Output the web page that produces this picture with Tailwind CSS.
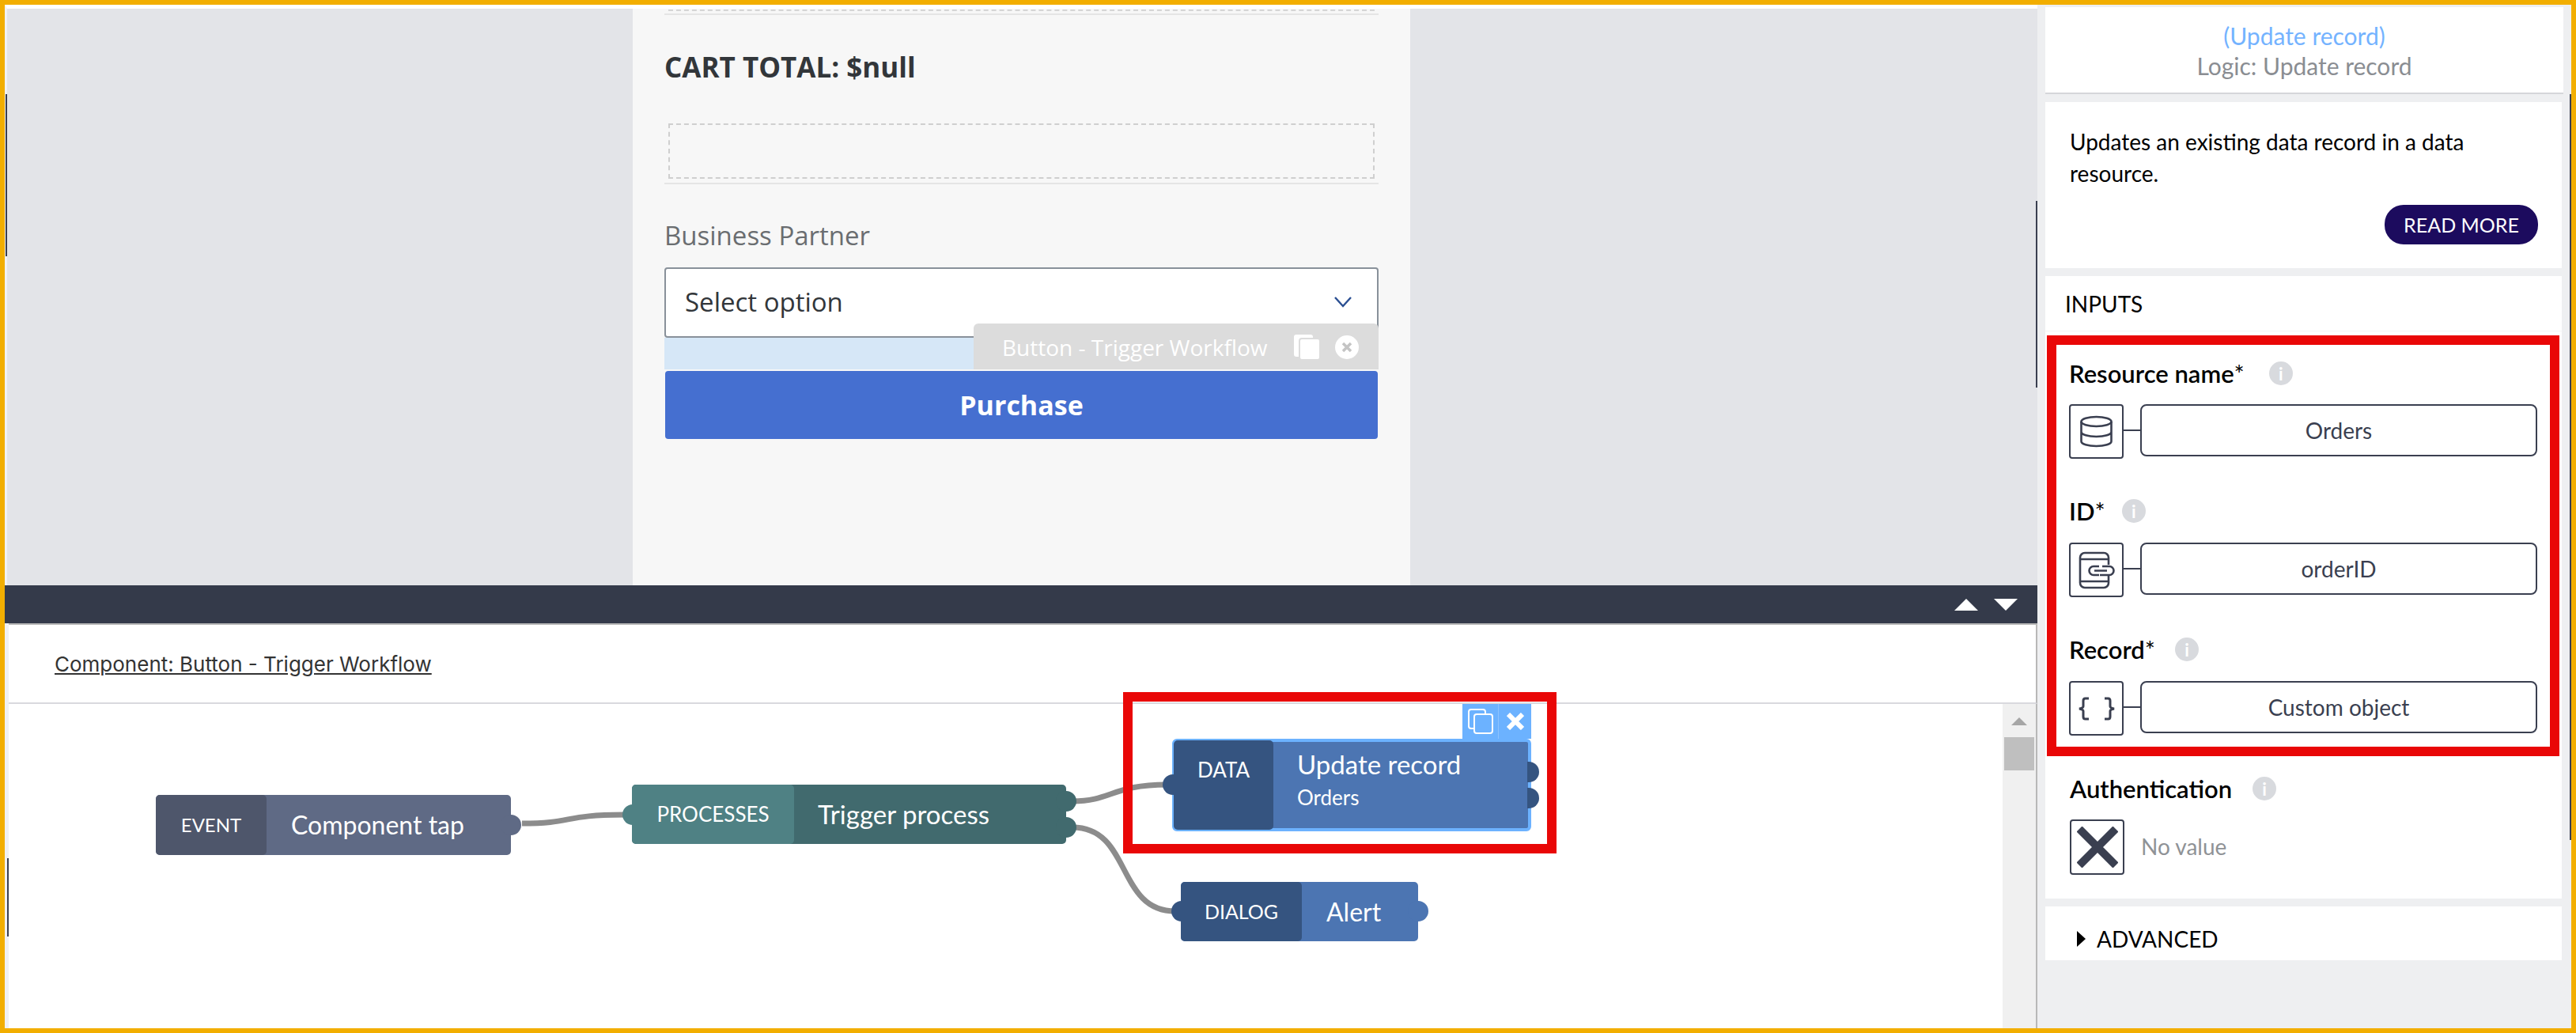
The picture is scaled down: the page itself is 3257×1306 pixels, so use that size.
<!DOCTYPE html>
<html lang="en">
  <head>
    <meta charset="UTF-8" />
    <title>Logic canvas: Update record</title>
    <script src="https://cdn.jsdelivr.net/npm/@tailwindcss/browser@4"></script>
  </head>
  <body class="bg-white font-['Lato',sans-serif]">
    <div class="relative w-[3257px] h-[1306px] border-[6px] border-[#f2ae00] flex overflow-hidden">
      <!-- Left: app preview + logic canvas -->
      <div class="w-[2570px] flex flex-col">
        <div class="h-[734px] bg-[#e3e4e8] border-l-[3px] border-l-[#f1f2f4] border-t-[5px] border-t-white pr-[2px] overflow-hidden">
          <div class="w-[983px] h-[729px] mx-auto bg-[#f7f7f7] px-[40px] font-['Open_Sans',sans-serif]">
            <div class="mx-[5px] h-[3px] border-b-2 border-dashed border-[#d5d5d5]"></div>
            <div class="h-[5px] border-b-2 border-[#e5e5e5]"></div>
            <h2 class="mt-[44px] h-[44px] leading-[44px] text-[35px] font-bold text-[#32363a] whitespace-nowrap">CART TOTAL: $null</h2>
            <div class="mt-[49px] mx-[5px] h-[70px] border-2 border-dashed border-[#cfcfcf]"></div>
            <div class="mt-[5px] h-[2px] bg-[#e5e5e5]"></div>
            <div class="mt-[47px] h-[36px] leading-[36px] text-[33px] text-[#6a6d70]">Business Partner</div>
            <div class="mt-[22px] h-[89px] bg-white border-2 border-[#89919a] rounded-[4px] flex items-center justify-between pl-[24px] pr-[32px] pb-[2px] text-[33px] text-[#32363a]">
              <span>Select option</span>
              <svg class="w-[22px] h-[14px]" viewBox="0 0 22 14" fill="none" stroke="#2a4f92" stroke-width="2.4"><path d="M1 1l10 11L21 1" /></svg>
            </div>
            <div class="relative h-[40px] bg-[#d6e7f7]">
              <div class="absolute right-0 bottom-0 w-[512px] h-[58px] bg-[#dcdcdc] rounded-t-[6px] flex items-center pl-[36px] pt-[2px] text-white text-[28px]">
                <span class="w-[368px] whitespace-nowrap">Button - Trigger Workflow</span>
                <svg class="w-[38px] h-[32px]" viewBox="0 0 38 32" fill="white"><rect x="1" y="0" width="24" height="28" rx="3" /><rect x="8" y="5" width="26" height="27" rx="3" stroke="#dcdcdc" stroke-width="2" /></svg>
                <svg class="ml-[15px] w-[30px] h-[30px]" viewBox="0 0 30 30"><circle cx="15" cy="15" r="15" fill="white" /><path d="M10 10l10 10M20 10L10 20" stroke="#c4c4c4" stroke-width="3.5" /></svg>
              </div>
            </div>
            <button class="mt-[2px] mx-[1px] w-[901px] h-[86px] bg-[#456fd0] rounded-[4px] text-white text-[34px] font-bold">Purchase</button>
          </div>
        </div>
        <div class="h-[48px] bg-[#343a4a] flex items-center justify-end gap-[20px] pr-[25px]">
          <div class="w-0 h-0 border-x-[15px] border-x-transparent border-b-[15px] border-b-white"></div>
          <div class="w-0 h-0 border-x-[15px] border-x-transparent border-t-[15px] border-t-white"></div>
        </div>
        <div class="flex-1 flex flex-col bg-[#f0f1f3] pl-[5px]">
          <div class="h-[102px] bg-white border-t-2 border-t-[#b8b8b8] border-b-2 border-b-[#d9d9de] border-r-2 border-r-[#b8b8b8] flex items-center pl-[58px]">
            <span class="underline font-['Inter',sans-serif] text-[26px] text-[#333333]">Component: Button - Trigger Workflow</span>
          </div>
          <div class="flex-1 flex bg-white border-r-2 border-r-[#b8b8b8]">
            <!-- Diagram canvas, nodes sit at free coordinates -->
            <div class="relative flex-1 text-white">
              <svg class="absolute inset-0 w-full h-full overflow-visible" fill="none" stroke="#8c8c8c" stroke-width="7">
                <path d="M649 151C715 151 700 140 780 140" />
                <path d="M1345 123C1395 123 1395 102 1465 102" />
                <path d="M1345 156C1420 156 1400 262 1475 262" />
              </svg>

              <div class="absolute left-[186px] top-[115px] w-[449px] h-[76px] flex rounded-[5px] bg-[#5f6a85]">
                <div class="w-[140px] rounded-[5px] bg-[#4e566b] flex items-center justify-center text-[24px]">EVENT</div>
                <div class="pl-[31px] flex items-center text-[32px] whitespace-nowrap">Component tap</div>
                <span class="absolute right-[-13px] top-[25px] w-[26px] h-[26px] rounded-full bg-[#5f6a85]"></span>
              </div>

              <div class="absolute left-[788px] top-[102px] w-[549px] h-[75px] flex rounded-[5px] bg-[#416a6e]">
                <span class="absolute left-[-12px] top-[25px] w-[26px] h-[26px] rounded-full bg-[#4f8184]"></span>
                <div class="relative w-[205px] rounded-[5px] bg-[#4f8184] flex items-center justify-center text-[26px]">PROCESSES</div>
                <div class="pl-[30px] flex items-center text-[33px] whitespace-nowrap">Trigger process</div>
                <span class="absolute right-[-13px] top-[8px] w-[26px] h-[26px] rounded-full bg-[#416a6e]"></span>
                <span class="absolute right-[-13px] top-[41px] w-[26px] h-[26px] rounded-full bg-[#416a6e]"></span>
              </div>

              <div class="absolute left-[1471px] top-[44px] w-[454px] h-[117px] flex border-4 border-[#6cb2ff] rounded-[6px] bg-[#4c75b2]">
                <span class="absolute left-[-16px] top-[41px] w-[26px] h-[26px] rounded-full bg-[#355480]"></span>
                <div class="relative w-[126px] -my-[2px] -ml-[2px] rounded-[5px] bg-[#355480] flex justify-center pt-[18px] text-[26px]">DATA</div>
                <div class="pl-[30px] pt-[8px]">
                  <div class="text-[33px] leading-[40px] whitespace-nowrap">Update record</div>
                  <div class="text-[26px] leading-[36px] mt-[4px]">Orders</div>
                </div>
                <span class="absolute right-[-14px] top-[25px] w-[15px] h-[26px] rounded-r-full bg-[#355480]"></span>
                <span class="absolute right-[-14px] top-[58px] w-[15px] h-[26px] rounded-r-full bg-[#355480]"></span>
                <div class="absolute right-[-4px] top-[-48px] w-[87px] h-[44px] bg-[#6cb2ff] flex">
                  <div class="w-[46px] flex items-center justify-center border-r border-r-[#8cc3ff]">
                    <svg class="w-[32px] h-[32px]" viewBox="0 0 32 32" fill="none" stroke="white" stroke-width="2"><path d="M7 25H4a3 3 0 0 1-3-3V4a3 3 0 0 1 3-3h15a3 3 0 0 1 3 3v3" /><rect x="8" y="7" width="23" height="24" rx="3" /></svg>
                  </div>
                  <div class="flex-1 flex items-center justify-center">
                    <svg class="w-[22px] h-[22px]" viewBox="0 0 22 22" fill="none" stroke="white" stroke-width="6"><path d="M2 2l18 18M20 2L2 20" /></svg>
                  </div>
                </div>
              </div>

              <div class="absolute left-[1482px] top-[225px] w-[300px] h-[75px] flex rounded-[5px] bg-[#4c75b2]">
                <span class="absolute left-[-12px] top-[24px] w-[26px] h-[26px] rounded-full bg-[#355480]"></span>
                <div class="relative w-[153px] rounded-[5px] bg-[#355480] flex items-center justify-center text-[25px]">DIALOG</div>
                <div class="pl-[31px] flex items-center text-[32px]">Alert</div>
                <span class="absolute right-[-13px] top-[24px] w-[26px] h-[26px] rounded-full bg-[#4c75b2]"></span>
              </div>

              <!-- Red callout round the selected node -->
              <div class="absolute left-[1409px] top-[-15px] w-[548px] h-[204px] border-[12px] border-[#e90707]"></div>
            </div>
            <div class="w-[42px] bg-[#f0f0f0] flex flex-col items-center pt-[17px]">
              <div class="w-0 h-0 border-x-[10px] border-x-transparent border-b-[10px] border-b-[#a6a6a6]"></div>
              <div class="mt-[15px] w-[38px] h-[42px] bg-[#bfbfbf]"></div>
            </div>
          </div>
        </div>
      </div>

      <!-- Right: properties sidebar -->
      <div class="w-[675px] bg-[#eeeff1] pl-[10px] pr-[12px] pt-[3px] flex flex-col">
        <div class="w-[655px] h-[110px] bg-white border-b-2 border-b-[#d5d6da] text-center text-[30px] pt-[17px]">
          <div class="h-[38px] leading-[38px] text-[#74b3ff]">(Update record)</div>
          <div class="h-[38px] leading-[38px] text-[#8a8d92]">Logic: Update record</div>
        </div>
        <div class="mt-[10px] h-[210px] bg-white px-[31px] pt-[30px] text-[28px] leading-[40px] text-black">
          <p class="w-[560px]">Updates an existing data record in a data resource.</p>
          <div class="flex justify-end -mr-px">
            <button class="mt-[20px] w-[194px] h-[50px] rounded-[24px] bg-[#1c0b5e] text-white text-[25px] leading-[50px]">READ MORE</button>
          </div>
        </div>
        <div class="mt-[10px] h-[787px] bg-white">
          <div class="h-[70px] border-b border-b-[#f5f5f5] pl-[25px] flex items-center text-[28px] text-black">INPUTS</div>
          <div class="mt-[5px] mx-[2px] h-[532px] w-[648px] border-[12px] border-[#e90707] pl-[16px] pt-[19px]">
            <div class="h-[34px] flex items-center gap-[31px]">
              <span class="text-[31px] font-semibold text-black whitespace-nowrap">Resource name<span class="font-normal">*</span></span>
              <span class="w-[30px] h-[30px] rounded-full bg-[#d8dade] flex items-center justify-center text-white text-[22px] font-bold">i</span>
            </div>
            <div class="mt-[22px] flex items-start">
              <div class="w-[69px] h-[69px] border-2 border-[#3a3f50] rounded-[4px] flex items-center justify-center">
                <svg class="w-[43px] h-[41px]" viewBox="0 0 43 41" fill="none" stroke="#3a3f50" stroke-width="2.6"><ellipse cx="21.500" cy="8" rx="19" ry="6" /><path d="M2.500 8v25c0 3.500 8.500 6 19 6s19-2.500 19-6V8M2.500 21c0 3.500 8.500 6 19 6s19-2.500 19-6" /></svg>
              </div>
              <div class="mt-[32px] w-[21px] h-[2px] bg-[#3a3f50]"></div>
              <div class="w-[502px] h-[66px] border-2 border-[#3a3f50] rounded-[8px] flex items-center justify-center text-[28px] text-[#3a3f50]">Orders</div>
            </div>

            <div class="mt-[49px] h-[34px] flex items-center gap-[21px]">
              <span class="text-[31px] font-semibold text-black">ID<span class="font-normal">*</span></span>
              <span class="w-[30px] h-[30px] rounded-full bg-[#d8dade] flex items-center justify-center text-white text-[22px] font-bold">i</span>
            </div>
            <div class="mt-[23px] flex items-start">
              <div class="w-[69px] h-[69px] border-2 border-[#3a3f50] rounded-[4px] flex items-center justify-center">
                <svg class="w-[46px] h-[48px]" viewBox="0 0 46 48" fill="none" stroke="#3a3f50" stroke-width="2.6"><path d="M38 17V8a6 6 0 0 0-6-6H8a6 6 0 0 0-6 6v32a6 6 0 0 0 6 6h24a6 6 0 0 0 6-6v-9M2 10h36M2 38h36" /><path d="M26 19h-7a5.500 5.500 0 0 0 0 11h7M27 30h12a5.500 5.500 0 0 0 0-11H30M20 24.500h16" fill="white" /></svg>
              </div>
              <div class="mt-[32px] w-[21px] h-[2px] bg-[#3a3f50]"></div>
              <div class="w-[502px] h-[66px] border-2 border-[#3a3f50] rounded-[8px] flex items-center justify-center text-[28px] text-[#3a3f50]">orderID</div>
            </div>

            <div class="mt-[49px] h-[34px] flex items-center gap-[25px]">
              <span class="text-[31px] font-semibold text-black">Record<span class="font-normal">*</span></span>
              <span class="w-[30px] h-[30px] rounded-full bg-[#d8dade] flex items-center justify-center text-white text-[22px] font-bold">i</span>
            </div>
            <div class="mt-[23px] flex items-start">
              <div class="w-[69px] h-[69px] border-2 border-[#3a3f50] rounded-[4px] flex items-center justify-center">
                <svg class="w-[48px] h-[30px]" viewBox="0 0 48 30" fill="none" stroke="#3a3f50" stroke-width="3"><path d="M14 2H9.500Q7 2 7 5v7q0 2-5 3 5 1 5 3v7q0 3 2.500 3H14M34 2h4.500Q41 2 41 5v7q0 2 5 3-5 1-5 3v7q0 3-2.500 3H34" /></svg>
              </div>
              <div class="mt-[32px] w-[21px] h-[2px] bg-[#3a3f50]"></div>
              <div class="w-[502px] h-[66px] border-2 border-[#3a3f50] rounded-[8px] flex items-center justify-center text-[28px] text-[#3a3f50]">Custom object</div>
            </div>
          </div>
          <div class="mt-[24px] pl-[31px]">
            <div class="h-[34px] flex items-center gap-[26px]">
              <span class="text-[31px] font-semibold text-black">Authentication</span>
              <span class="w-[30px] h-[30px] rounded-full bg-[#d8dade] flex items-center justify-center text-white text-[22px] font-bold">i</span>
            </div>
            <div class="mt-[22px] flex items-center gap-[21px]">
              <div class="w-[69px] h-[70px] border-2 border-[#3a3f50] rounded-[4px] flex items-center justify-center">
                <svg class="w-[52px] h-[52px]" viewBox="0 0 52 52" fill="none" stroke="#3a3f50" stroke-width="10"><path d="M3 3l46 46M49 3L3 49" /></svg>
              </div>
              <span class="text-[28px] text-[#8f9296] -mt-[2px]">No value</span>
            </div>
          </div>
        </div>
        <div class="mt-[10px] h-[68px] bg-white pl-[40px] pt-[14px] flex items-center gap-[14px] text-[28px] text-black">
          <span class="w-0 h-0 border-y-[10px] border-y-transparent border-l-[11px] border-l-black"></span>
          <span>ADVANCED</span>
        </div>
      </div>

      <!-- Resize handle slivers over the panel edges -->
      <div class="absolute left-[1px] top-[113px] w-[2px] h-[205px] bg-[#3a3f50]"></div>
      <div class="absolute left-[3px] top-[1079px] w-[2px] h-[99px] bg-[#3a3f50]"></div>
      <div class="absolute left-[2568px] top-[248px] w-[2px] h-[236px] bg-[#3a3f50]"></div>
      <div class="absolute right-0 top-[113px] w-[2px] h-[943px] bg-[#3a3f50]"></div>
    </div>
  </body>
</html>
